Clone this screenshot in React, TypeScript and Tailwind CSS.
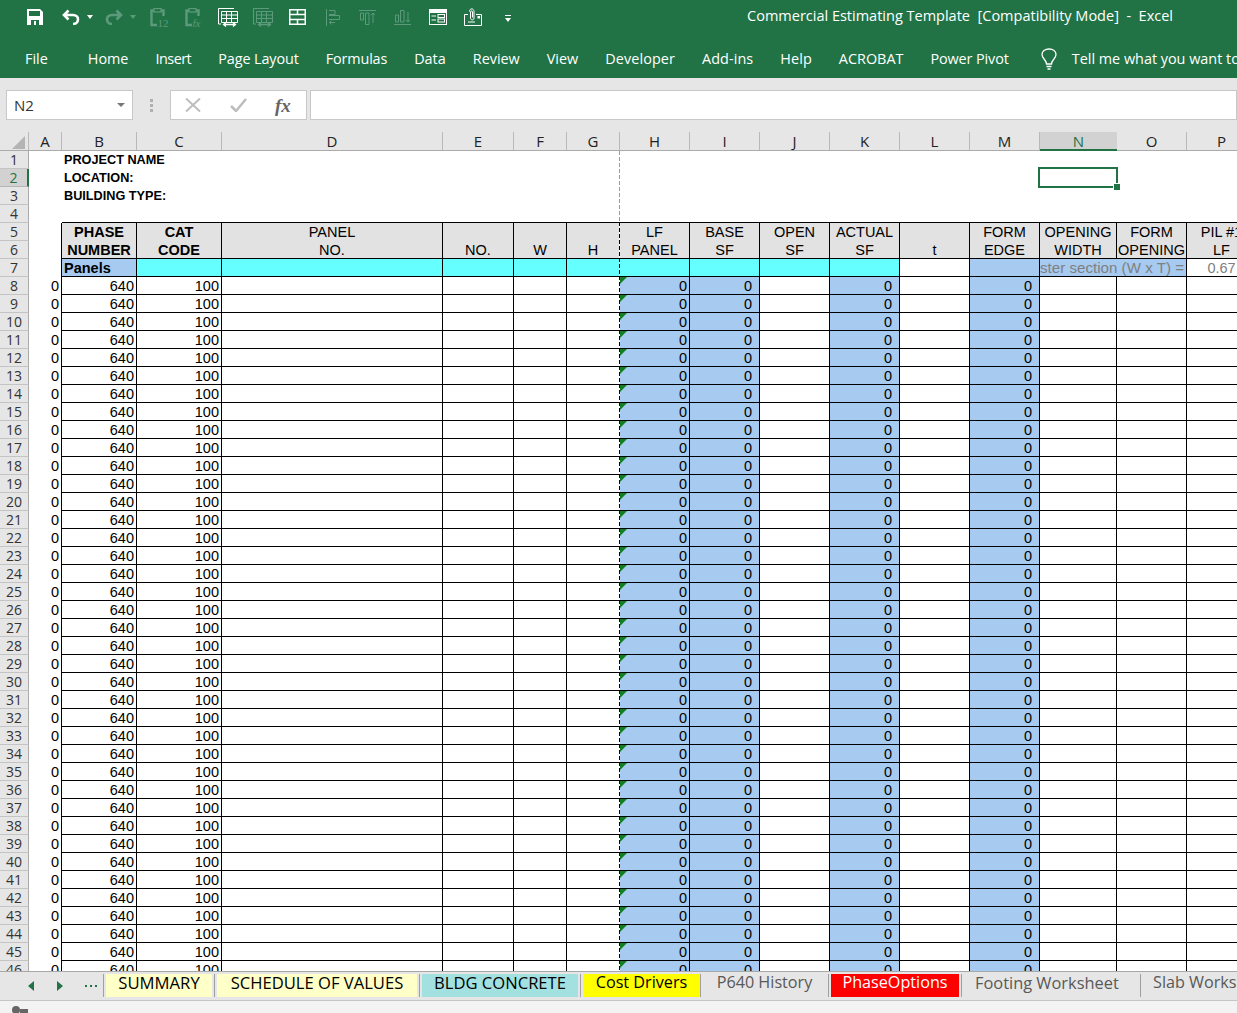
import React from "react";

const LIGHT = "#ffffff";
const DIM = "#5c9a7b";

function Save() {
  return (
    <svg width="16" height="16" viewBox="0 0 16 16" className="ml-[27px] shrink-0">
      <path d="M0 0H13L16 3V16H0Z" fill={LIGHT} />
      <rect x="2" y="2" width="11" height="5" fill="#217346" />
      <rect x="4" y="11" width="8" height="5" fill="#217346" />
      <rect x="7" y="12" width="2" height="4" fill={LIGHT} />
    </svg>
  );
}
function Undo({ color, flip, cls }: { color: string; flip?: boolean; cls: string }) {
  return (
    <svg width="18" height="16" viewBox="0 0 18 16" className={cls} style={flip ? { transform: "scaleX(-1)" } : undefined}>
      <path d="M6.5 1.5L2 6l4.5 4.5M2 6h9c3 0 5 1.8 5 4.2S14 15 11 15" fill="none" stroke={color} strokeWidth="2.6" />
    </svg>
  );
}
function Caret({ color, cls }: { color: string; cls: string }) {
  return (
    <svg width="6" height="4" viewBox="0 0 6 4" className={cls}>
      <path d="M0 0H6L3 4Z" fill={color} />
    </svg>
  );
}
function Clip({ label, cls, italic }: { label: string; cls: string; italic?: boolean }) {
  return (
    <svg width="20" height="19" viewBox="0 0 20 19" className={cls}>
      <path d="M4 2.5H1.5V17H7M11 2.5H13.5V8" fill="none" stroke={DIM} strokeWidth="2.4" />
      <rect x="4" y="0.5" width="7" height="3.5" fill="none" stroke={DIM} strokeWidth="1.2" />
      <text x="7.5" y="18.5" fontSize="11" fill={DIM} fontFamily="Liberation Serif, serif" fontStyle={italic ? "italic" : "normal"}>{label}</text>
    </svg>
  );
}
function Table({ color, cls }: { color: string; cls: string }) {
  return (
    <svg width="20" height="19" viewBox="0 0 20 19" className={cls}>
      <path d="M0.5 0.5H16M0.5 0.5V16H3" fill="none" stroke={color} strokeWidth="1" />
      <path d="M3.5 3.5H19.5V14.5H3.5ZM3.5 7H19.5M3.5 10.5H19.5M8.5 3.5V14.5M13.5 3.5V14.5" fill="none" stroke={color} strokeWidth="1" />
      <path d="M6 16.5H17M8 14.5L5.5 16.5L8 18.5M15 14.5L17.5 16.5L15 18.5" fill="none" stroke={color} strokeWidth="1.3" />
    </svg>
  );
}
function Split() {
  return (
    <svg width="17" height="16" viewBox="0 0 17 16" className="ml-[16px] shrink-0">
      <path d="M0.75 0.75H16.25V15.25H0.75ZM0.75 5.5H16.25M0.75 10.5H16.25M8.5 0.75V5.5M8.5 10.5V15.25" fill="none" stroke={LIGHT} strokeWidth="1.5" />
    </svg>
  );
}
function AlignLeft() {
  return (
    <svg width="14" height="17" viewBox="0 0 14 17" className="ml-[20px] shrink-0">
      <path d="M0.5 0V17M3 1.5H9V5.5H3M3 6.5H13.5V10.5H3M9 13.5H3.5M5.5 11.5L3.5 13.5L5.5 15.5" fill="none" stroke={DIM} strokeWidth="1" />
    </svg>
  );
}
function AlignTop() {
  return (
    <svg width="17" height="15" viewBox="0 0 17 15" className="ml-[19px] shrink-0">
      <path d="M0 0.5H17M1.5 3H4.5V10H1.5ZM6.5 3H10V14.5H6.5ZM14 13V3M12 5L14 3L16 5" fill="none" stroke={DIM} strokeWidth="1" />
    </svg>
  );
}
function AlignBottom() {
  return (
    <svg width="17" height="15" viewBox="0 0 17 15" className="ml-[18px] shrink-0">
      <path d="M0 14.5H17M1.5 5H4.5V12H1.5ZM6.5 0.5H10V12H6.5ZM14 2V12M12 10L14 12L16 10" fill="none" stroke={DIM} strokeWidth="1" />
    </svg>
  );
}
function Form() {
  return (
    <svg width="18" height="16" viewBox="0 0 18 16" className="ml-[18px] shrink-0">
      <rect width="18" height="16" fill={LIGHT} />
      <rect x="1" y="4" width="16" height="11" fill="#217346" />
      <path d="M2.5 7H7M2.5 11H7" stroke={LIGHT} strokeWidth="1" />
      <rect x="9" y="5.5" width="6.5" height="3" fill="none" stroke={LIGHT} strokeWidth="1" />
      <rect x="9" y="10" width="6.5" height="3" fill="none" stroke={LIGHT} strokeWidth="1" />
    </svg>
  );
}
function Attach() {
  return (
    <svg width="18" height="18" viewBox="0 0 18 18" className="ml-[17px] shrink-0">
      <path d="M4 6.5H0.5V17.5H17.5V6.5H12" fill="none" stroke={LIGHT} strokeWidth="1" />
      <path d="M5.5 3.5C5.5 0 10 0 10 3.5V10C10 12.5 6.5 12.5 6.5 10V4C6.5 2.5 8.5 2.5 8.5 4V9.5" fill="none" stroke={LIGHT} strokeWidth="1" />
      <path d="M4 14H11" stroke={LIGHT} strokeWidth="1" />
      <rect x="13.5" y="8" width="2.5" height="2.5" fill={LIGHT} />
    </svg>
  );
}
function More() {
  return (
    <svg width="6" height="7" viewBox="0 0 6 7" className="ml-[23px] mt-[3px] shrink-0">
      <path d="M0 0.5H6" stroke={LIGHT} strokeWidth="1" />
      <path d="M0 3H6L3 7Z" fill={LIGHT} />
    </svg>
  );
}

const RIBBON = [
  { t: "Home", c: "" },
  { t: "Insert", c: "tracking-[-0.5px]" },
  { t: "Page Layout", c: "tracking-[-0.1px]" },
  { t: "Formulas", c: "tracking-[-0.15px]" },
  { t: "Data", c: "" },
  { t: "Review", c: "" },
  { t: "View", c: "" },
  { t: "Developer", c: "tracking-[0.1px]" },
  { t: "Add-ins", c: "tracking-[0.1px]" },
  { t: "Help", c: "tracking-[0.1px]" },
  { t: "ACROBAT", c: "" },
  { t: "Power Pivot", c: "tracking-[-0.1px]" },
];
const COLS = ["A", "B", "C", "D", "E", "F", "G", "H", "I", "J", "K", "L", "M", "N", "O", "P"];
const TOTAL_ROWS = Array.from({ length: 39 }, (_, i) => i + 8);
const BODY_BLANK = "border-r border-b border-black";
const NUM = " text-right pr-[2px]";
const NUM_WIDE = " text-right pr-[7px]";
const HEAD = "row-span-2 bg-[#e2e2e2] border-r border-b border-black flex flex-col justify-end items-center leading-[18px] whitespace-nowrap overflow-hidden [&>span]:translate-y-[1px]";

function RowNo({ n, active }: { n: number; active?: boolean }) {
  return (
    <div className={active
      ? "bg-[#d2d2d2] text-[#217346] border-r-2 border-r-[#217346] border-b border-b-[#b5b5b5] text-center font-['Open_Sans',sans-serif] text-[14px] leading-[18px]"
      : "bg-[#e6e6e6] text-[#333333] border-r border-r-[#ababab] border-b border-b-[#c4c4c4] text-center font-['Open_Sans',sans-serif] text-[14px] leading-[18px]"}>
      {n}
    </div>
  );
}

function Blank({ count }: { count: number }) {
  return <>{Array.from({ length: count }, (_, i) => <div key={i} />)}</>;
}

function DataRow({ n }: { n: number }) {
  return (
    <>
      <RowNo n={n} />
      <div className={"border-r border-black" + NUM}>0</div>
      <div className={BODY_BLANK + NUM}>640</div>
      <div className={BODY_BLANK + NUM}>100</div>
      <div className={BODY_BLANK} />
      <div className={BODY_BLANK} />
      <div className={BODY_BLANK} />
      <div className={BODY_BLANK} />
      <div className={BODY_BLANK + " relative bg-[#a6caf0]" + NUM}>
        <div className="absolute left-0 top-0 w-[7px] h-[7px] bg-[#0f7f1f] [clip-path:polygon(0_0,100%_0,0_100%)]" />
        0
      </div>
      <div className={BODY_BLANK + " bg-[#a6caf0]" + NUM_WIDE}>0</div>
      <div className={BODY_BLANK} />
      <div className={BODY_BLANK + " bg-[#a6caf0]" + NUM_WIDE}>0</div>
      <div className={BODY_BLANK} />
      <div className={BODY_BLANK + " bg-[#a6caf0]" + NUM_WIDE}>0</div>
      <div className={BODY_BLANK} />
      <div className={BODY_BLANK} />
      <div className={BODY_BLANK} />
    </>
  );
}

function HeaderCell({ c }: { c: string }) {
  const active = c === "N";
  return (
    <div className={active ? "bg-[#e6e6e6] pt-[2px]" : "bg-[#e6e6e6] pt-[2px] border-b border-b-[#ababab]"}>
      <div className={active
        ? "h-full bg-[#d2d2d2] text-[#217346] border-b-2 border-b-[#217346] text-center font-['Open_Sans',sans-serif] text-[15px] leading-[18px]"
        : "h-full border-r border-r-[#b9b9b9] text-[#222222] text-center font-['Open_Sans',sans-serif] text-[15px] leading-[18px]"}>
        {c}
      </div>
    </div>
  );
}

function Sep() {
  return <div className="w-[1px] h-[23px] bg-[#a0a0a0] shrink-0" />;
}

export default function App() {
  return (
    <div className="w-[1237px] h-[1013px] overflow-hidden bg-[#e6e6e6] flex flex-col">
      <div className="h-[78px] shrink-0 bg-[#217346] text-white font-['Open_Sans',sans-serif]">
        <div className="h-[34px] flex items-center">
          <Save />
          <Undo color={LIGHT} cls="ml-[19px] shrink-0" />
          <Caret color={LIGHT} cls="ml-[7px] shrink-0" />
          <Undo color={DIM} flip cls="ml-[12px] shrink-0" />
          <Caret color={DIM} cls="ml-[7px] shrink-0" />
          <Clip label="12" cls="ml-[14px] shrink-0" />
          <Clip label="fx" italic cls="ml-[15px] shrink-0" />
          <Table color={LIGHT} cls="ml-[13px] shrink-0" />
          <Table color={DIM} cls="ml-[15px] shrink-0" />
          <Split />
          <AlignLeft />
          <AlignTop />
          <AlignBottom />
          <Form />
          <Attach />
          <More />
          <div className="ml-auto mr-[64px] text-[14.5px] whitespace-pre pb-[2px]">Commercial Estimating Template  [Compatibility Mode]  -  Excel</div>
        </div>
        <div className="h-[44px] flex items-center text-[14.4px] whitespace-nowrap pt-[6px]">
          <div className="ml-[25px] mr-[40px]">File</div>
          <div className="flex gap-[27px]">
            {RIBBON.map((r) => <div key={r.t} className={r.c}>{r.t}</div>)}
          </div>
          <svg width="16" height="22" viewBox="0 0 16 22" className="ml-[32px] shrink-0">
            <path d="M5.5 16C5.5 12 1 10.5 1 6.5C1 3.2 4 1 8 1S15 3.2 15 6.5C15 10.5 10.5 12 10.5 16ZM5.5 18.5H10.5M6.5 21H9.5" fill="none" stroke="#ffffff" strokeWidth="1.3" />
          </svg>
          <div className="ml-[15px]">Tell me what you want to do</div>
        </div>
      </div>

      <div className="h-[52px] shrink-0 flex pt-[12px] pb-[10px] bg-[#e6e6e6]">
        <div className="ml-[6px] w-[127px] bg-white border border-[#c8c8c8] flex items-center justify-between pl-[7px] pr-[7px] text-[15px] text-[#333333] font-['Open_Sans',sans-serif]">
          N2
          <svg width="8" height="4" viewBox="0 0 8 4"><path d="M0 0H8L4 4Z" fill="#777777" /></svg>
        </div>
        <div className="w-[37px] flex flex-col items-center justify-center gap-[2px]">
          <div className="w-[3px] h-[3px] bg-[#b0b0b0]" />
          <div className="w-[3px] h-[3px] bg-[#b0b0b0]" />
          <div className="w-[3px] h-[3px] bg-[#b0b0b0]" />
        </div>
        <div className="w-[137px] bg-white border border-[#c8c8c8] flex items-center">
          <svg width="16" height="14" viewBox="0 0 16 14" className="ml-[14px]"><path d="M1 0.5L15 13.5M15 0.5L1 13.5" stroke="#bdbdbd" strokeWidth="2" /></svg>
          <svg width="17" height="14" viewBox="0 0 17 14" className="ml-[29px]"><path d="M1 8L6 13L16 1" fill="none" stroke="#bdbdbd" strokeWidth="2.5" /></svg>
          <div className="ml-[28px] text-[19px] italic font-bold text-[#666666] font-['Liberation_Serif',serif] leading-none">fx</div>
        </div>
        <div className="ml-[3px] flex-1 bg-white border border-[#c8c8c8]" />
      </div>

      <div className="relative h-[841px] shrink-0 overflow-hidden bg-white font-['Liberation_Sans',sans-serif] text-[14.5px] text-black">
        <div className="grid grid-cols-[29px_33px_75px_85px_221px_71px_53px_53px_70px_70px_70px_70px_70px_70px_77px_70px_70px] grid-rows-[21px] auto-rows-[18px] w-[1277px] leading-[18px]">
          <div className="bg-[#e6e6e6] pt-[2px] border-b border-b-[#ababab]">
            <div className="h-full border-r border-r-[#b9b9b9] flex items-end justify-end pr-[3px] pb-[1px]">
              <div className="w-[13px] h-[13px] bg-[#b4b4b4] [clip-path:polygon(100%_0,100%_100%,0_100%)]" />
            </div>
          </div>
          {COLS.map((c) => <HeaderCell key={c} c={c} />)}

          <RowNo n={1} />
          <div />
          <div className="whitespace-nowrap font-bold text-[12.7px] pl-[2px]">PROJECT NAME</div>
          <Blank count={14} />

          <RowNo n={2} active />
          <div />
          <div className="whitespace-nowrap font-bold text-[12.7px] pl-[2px]">LOCATION:</div>
          <Blank count={11} />
          <div className="relative z-10">
            <div className="absolute left-[-2px] top-[-2px] w-[80px] h-[21px] border-2 border-[#217346]" />
            <div className="absolute left-[73px] top-[14px] w-[6px] h-[6px] bg-[#217346] border border-white box-content" />
          </div>
          <Blank count={2} />

          <RowNo n={3} />
          <div />
          <div className="whitespace-nowrap font-bold text-[12.7px] pl-[2px]">BUILDING TYPE:</div>
          <Blank count={14} />

          <RowNo n={4} />
          <div />
          {Array.from({ length: 15 }, (_, i) => <div key={i} className="border-b border-black" />)}

          <RowNo n={5} />
          <div className="border-r border-black" />
          <div className={HEAD + " font-bold"}><span>PHASE</span><span>NUMBER</span></div>
          <div className={HEAD + " font-bold"}><span>CAT</span><span>CODE</span></div>
          <div className={HEAD}><span>PANEL</span><span>NO.</span></div>
          <div className={HEAD}><span>NO.</span></div>
          <div className={HEAD}><span>W</span></div>
          <div className={HEAD}><span>H</span></div>
          <div className={HEAD}><span>LF</span><span>PANEL</span></div>
          <div className={HEAD}><span>BASE</span><span>SF</span></div>
          <div className={HEAD}><span>OPEN</span><span>SF</span></div>
          <div className={HEAD}><span>ACTUAL</span><span>SF</span></div>
          <div className={HEAD}><span>t</span></div>
          <div className={HEAD}><span>FORM</span><span>EDGE</span></div>
          <div className={HEAD}><span>OPENING</span><span>WIDTH</span></div>
          <div className={HEAD}><span>FORM</span><span>OPENING</span></div>
          <div className={HEAD}><span>PIL #1</span><span>LF</span></div>

          <RowNo n={6} />
          <div className="border-r border-black" />

          <RowNo n={7} />
          <div className="border-r border-black" />
          <div className={BODY_BLANK + " bg-[#a6caf0] font-bold pl-[2px]"}>Panels</div>
          {Array.from({ length: 9 }, (_, i) => <div key={i} className={BODY_BLANK + " bg-[#66ffff]"} />)}
          <div className={BODY_BLANK} />
          <div className={BODY_BLANK + " bg-[#a6caf0]"} />
          <div className={BODY_BLANK + " col-span-2 bg-[#a6caf0] text-[#808080] text-[15.15px] overflow-hidden whitespace-nowrap flex justify-end pr-[2px]"}>Plaster section (W x T) =</div>
          <div className={BODY_BLANK + " text-[#808080] text-center"}>0.67</div>

          {TOTAL_ROWS.map((n) => <DataRow key={n} n={n} />)}
        </div>
        <div className="absolute left-[619px] top-[21px] w-[1px] h-[71px] bg-[repeating-linear-gradient(to_bottom,#9a9a9a_0,#9a9a9a_4px,#ffffff_4px,#ffffff_6px)]" />
        <div className="absolute left-[619px] top-[92px] bottom-0 w-[1px] bg-[repeating-linear-gradient(to_bottom,transparent_0,transparent_4px,#ffffff_4px,#ffffff_6px)]" />
      </div>

      <div className="h-[30px] shrink-0 border-t border-[#a8a8a8] border-b border-b-[#c6c6c6] bg-[#e6e6e6] flex items-start pt-[2px] whitespace-nowrap overflow-hidden font-['Open_Sans',sans-serif] text-[16.2px] leading-[17px] text-[#595959]">
        <div className="w-[103px] h-[23px] flex items-center shrink-0">
          <svg width="6" height="10" viewBox="0 0 6 10" className="ml-[28px]"><path d="M6 0V10L0 5Z" fill="#217346" /></svg>
          <svg width="6" height="10" viewBox="0 0 6 10" className="ml-[23px]"><path d="M0 0V10L6 5Z" fill="#217346" /></svg>
          <div className="ml-[22px] flex gap-[3px]">
            <div className="w-[2px] h-[2px] bg-[#217346]" />
            <div className="w-[2px] h-[2px] bg-[#217346]" />
            <div className="w-[2px] h-[2px] bg-[#217346]" />
          </div>
        </div>
        <Sep />
        <div className="ml-[2px] w-[106px] h-[23px] bg-[#ffffc8] text-black text-[16.7px] text-center shrink-0">SUMMARY</div>
        <div className="ml-[2px]"><Sep /></div>
        <div className="ml-[2px] w-[200px] h-[23px] bg-[#ffffc8] text-black text-[16.6px] text-center shrink-0">SCHEDULE OF VALUES</div>
        <div className="ml-[2px]"><Sep /></div>
        <div className="ml-[2px] w-[156px] h-[23px] bg-[#a3e0e0] text-black text-[16.6px] text-center shrink-0">BLDG CONCRETE</div>
        <div className="ml-[2px]"><Sep /></div>
        <div className="ml-[2px] w-[117px] h-[23px] bg-[#ffff00] text-black text-center shrink-0">Cost Drivers</div>
        <Sep />
        <div className="w-[127px] h-[23px] text-center shrink-0">P640 History</div>
        <Sep />
        <div className="ml-[2px] w-[128px] h-[23px] bg-[#ff0000] text-white text-center shrink-0">PhaseOptions</div>
        <div className="ml-[2px]"><Sep /></div>
        <div className="w-[178px] h-[23px] pl-[13px] text-[16.4px] shrink-0">Footing Worksheet</div>
        <Sep />
        <div className="pl-[12px]">Slab Worksheet</div>
      </div>

      <div className="flex-1 bg-[#f3f3f3] overflow-hidden">
        <svg width="16" height="12" viewBox="0 0 16 12" className="ml-[12px] mt-[5px]">
          <circle cx="4" cy="4" r="4" fill="#666666" />
          <rect x="8" y="3" width="8" height="7" fill="#666666" />
        </svg>
      </div>
    </div>
  );
}
